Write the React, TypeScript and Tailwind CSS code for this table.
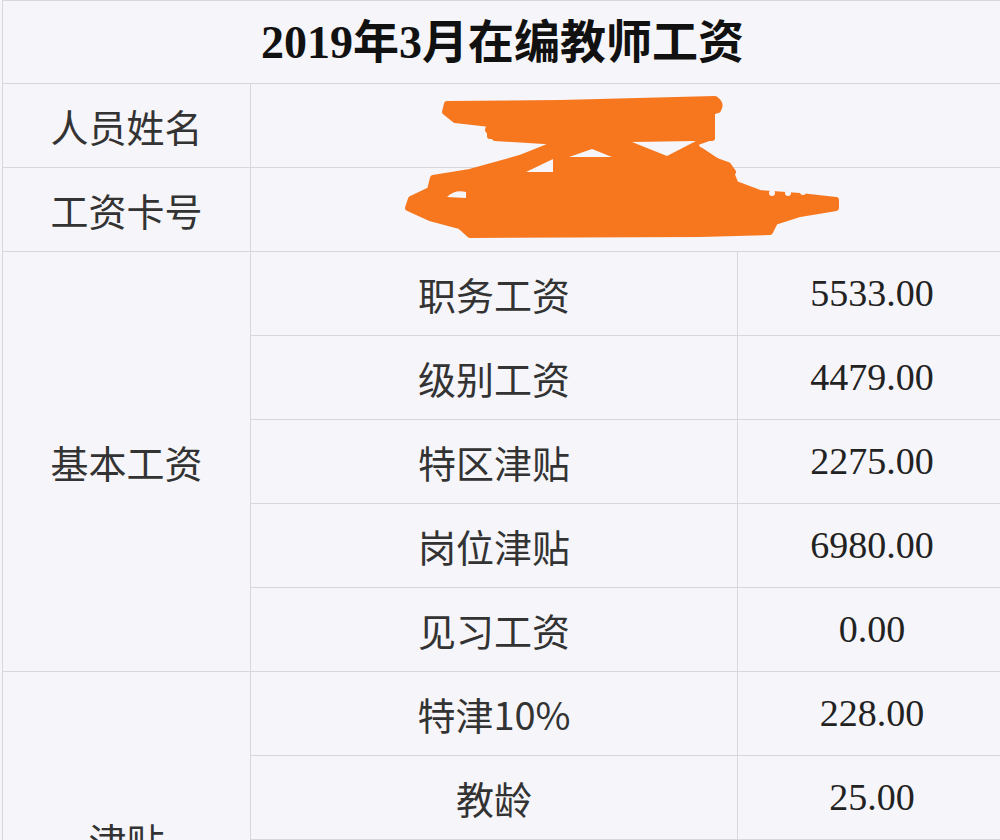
import React from "react";

const rows: { label?: string; span?: number; item: string; value: string }[] = [
  { label: "基本工资", span: 5, item: "职务工资", value: "5533.00" },
  { item: "级别工资", value: "4479.00" },
  { item: "特区津贴", value: "2275.00" },
  { item: "岗位津贴", value: "6980.00" },
  { item: "见习工资", value: "0.00" },
  { label: "津贴", span: 4, item: "特津10%", value: "228.00" },
  { item: "教龄", value: "25.00" },
  { item: "", value: "" },
  { item: "", value: "" },
];

const cell = "border border-[#d6d6db] text-center align-middle";
const cjk = "font-['Noto_Sans_CJK_SC',sans-serif] text-[38px] text-[#333]";
const num = "font-['Liberation_Serif',serif] text-[38px] text-[#222]";

function Scribble() {
  // 涂抹遮挡姓名和卡号
  return (
    <svg
      className="pointer-events-none absolute inset-0"
      width={1000}
      height={840}
      viewBox="0 0 1000 840"
    >
      <g fill="#f7771f" stroke="#f7771f" strokeWidth={6} strokeLinejoin="round">
        <path d="M447 104 L560 103 L715 99 Q722 104 718 110 L700 116 L690 119 L710 125 L712 137 L695 143 L700 155 L728 165 L733 172 L728 181 L760 193 L800 196 L836 200 L836 208 L800 214 L775 222 L770 232 L700 234 L470 235 L460 226 L430 218 L408 208 L411 199 L430 190 L433 178 L470 172 L520 158 L560 142 L495 138 L488 130 L490 124 L455 120 L445 112 Z" />
        <path d="M490 108 L712 104 L712 138 L490 136 Z" />
        <path d="M470 175 L700 150 L730 170 L740 195 L470 200 Z" />
      </g>
      <g fill="#f6f5f9">
        <path d="M526 172 L553 159 L553 172 Z" />
        <path d="M569 157 L592 149 L612 157 Z" />
        <path d="M632 142 L696 141 L667 156 Z" />
        <path d="M447 197 Q455 189 466 192 L466 198 Z" />
      </g>
      <g fill="#f6f5f9">
        <circle cx={772} cy={193} r={3} />
        <circle cx={788} cy={193} r={3} />
        <circle cx={803} cy={192} r={3} />
      </g>
    </svg>
  );
}

export default function App() {
  return (
    <div className="relative h-[840px] w-[1000px] overflow-hidden bg-[#f6f5f9]">
      <table className="ml-[2px] w-[1004px] table-fixed border-collapse">
        <colgroup>
          <col className="w-[248px]" />
          <col className="w-[487px]" />
          <col className="w-[269px]" />
        </colgroup>
        <tbody>
          <tr className="h-[83px]">
            <td
              colSpan={3}
              className={`${cell} font-['Liberation_Serif','Noto_Sans_CJK_SC',serif] text-[46px] font-bold text-[#111] pr-[4px]`}
            >
              2019年3月在编教师工资
            </td>
          </tr>
          <tr className="h-[84px]">
            <td className={`${cell} ${cjk}`}>人员姓名</td>
            <td colSpan={2} className={cell}></td>
          </tr>
          <tr className="h-[84px]">
            <td className={`${cell} ${cjk}`}>工资卡号</td>
            <td colSpan={2} className={cell}></td>
          </tr>
          {rows.map((r, i) => (
            <tr key={i} className="h-[84px]">
              {r.label && (
                <td rowSpan={r.span} className={`${cell} ${cjk}`}>
                  {r.label}
                </td>
              )}
              <td className={`${cell} ${cjk}`}>{r.item}</td>
              <td className={`${cell} ${num}`}>{r.value}</td>
            </tr>
          ))}
        </tbody>
      </table>
      <Scribble />
    </div>
  );
}
